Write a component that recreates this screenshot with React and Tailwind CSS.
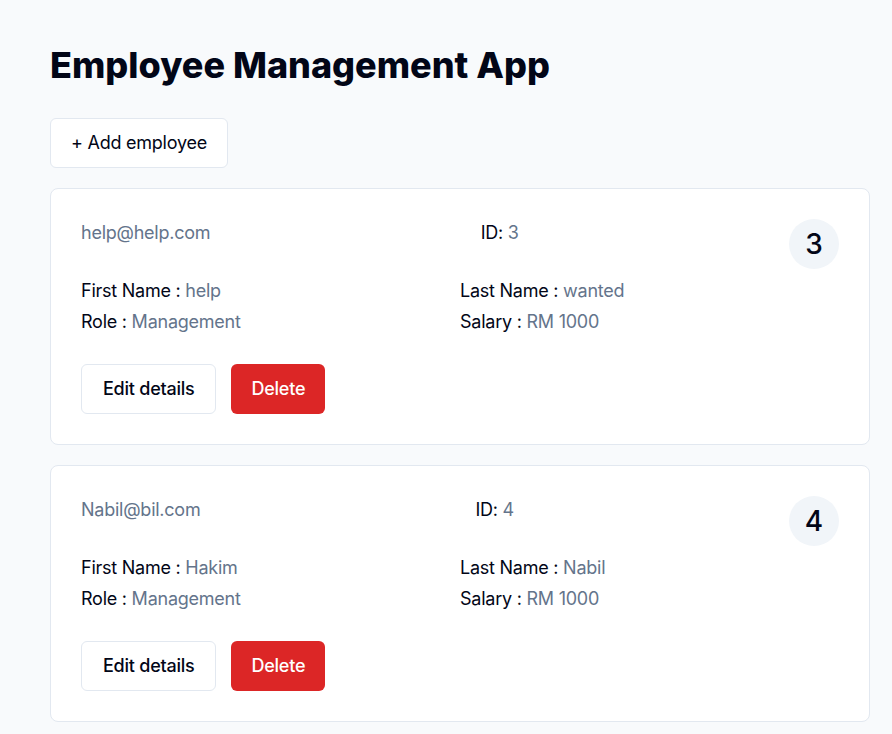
import React from "react";

const employees = [
  { email: "help@help.com", id: 3, first: "help", last: "wanted", role: "Management", salary: "RM 1000" },
  { email: "Nabil@bil.com", id: 4, first: "Hakim", last: "Nabil", role: "Management", salary: "RM 1000" },
];

function Card({ e }) {
  return (
    <div className="rounded-lg border border-[#e2e8f0] bg-white p-[30px]">
      <div className="flex items-start justify-between">
        <div className="text-lg leading-7 text-[#64748b]">{e.email}</div>
        <div className="text-lg leading-7 text-[#020617]">
          ID: <span className="text-[#64748b]">{e.id}</span>
        </div>
        <div className="flex h-[50px] w-[50px] items-center justify-center rounded-full bg-[#f1f5f9] text-[28px] font-medium tracking-normal text-[#020617]">
          {e.id}
        </div>
      </div>
      <div className="mt-[8px] grid grid-cols-2 gap-y-[3px] text-lg leading-7 text-[#020617]">
        <div>
          First Name : <span className="text-[#64748b]">{e.first}</span>
        </div>
        <div>
          Last Name : <span className="text-[#64748b]">{e.last}</span>
        </div>
        <div>
          Role : <span className="text-[#64748b]">{e.role}</span>
        </div>
        <div>
          Salary : <span className="text-[#64748b]">{e.salary}</span>
        </div>
      </div>
      <div className="mt-[28px] flex gap-[15px]">
        <button className="h-[50px] rounded-md border border-[#e2e8f0] bg-white px-[21px] text-lg font-medium text-[#020617]">
          Edit details
        </button>
        <button className="h-[50px] rounded-md bg-[#dc2626] px-5 text-lg font-medium text-white">
          Delete
        </button>
      </div>
    </div>
  );
}

export default function App() {
  return (
    <div
      className="min-h-screen bg-[#f8fafc] pl-[50px] pr-[22px] pt-[45px] pb-10 tracking-[-0.015em]"
      style={{ fontFamily: "Inter, 'Noto Sans', sans-serif" }}
    >
      <h1 className="text-4xl leading-10 font-extrabold tracking-normal text-[#020617]">
        Employee Management App
      </h1>
      <button className="mt-[33px] h-[50px] rounded-md border border-[#e2e8f0] bg-white px-5 text-lg text-[#020617]">
        + Add employee
      </button>
      <div className="mt-[20px] flex flex-col gap-[20px]">
        {employees.map((e) => (
          <Card key={e.id} e={e} />
        ))}
      </div>
    </div>
  );
}
